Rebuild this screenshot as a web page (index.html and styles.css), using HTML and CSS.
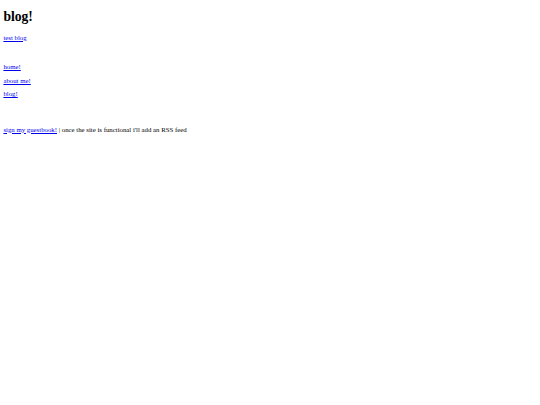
FILE: index.html
```html
<!DOCTYPE html>
<html>
<head>
<meta charset="utf-8">
<title>blog!</title>
<link rel="stylesheet" href="styles.css">
</head>
<body>
<h1 class="title">blog!</h1>
<p class="line"><a class="link" href="#">test blog</a></p>
<nav class="nav">
  <p class="line"><a class="link" href="#">home!</a></p>
  <p class="line"><a class="link" href="#">about me!</a></p>
  <p class="line"><a class="link" href="#">blog!</a></p>
</nav>
<p class="line footer"><a class="link" href="#">sign my guestbook!</a> | once the site is functional i'll add an RSS feed</p>
</body>
</html>
```
FILE: styles.css
```css
html {
  background: #fff;
}
body {
  margin: 3.4px;
  font-family: "Liberation Serif", "Times New Roman", serif;
  font-size: 6.8px;
  color: #000;
}
.title {
  margin: 6.1px 0 8.1px;
  font-size: 13.6px;
  font-weight: bold;
}
.line {
  margin: 6.8px 0;
}
.link {
  color: #0000ee;
  text-decoration: underline;
}
.nav {
  padding-top: 8.7px;
}
.footer {
  margin-top: 28.2px;
}
```
